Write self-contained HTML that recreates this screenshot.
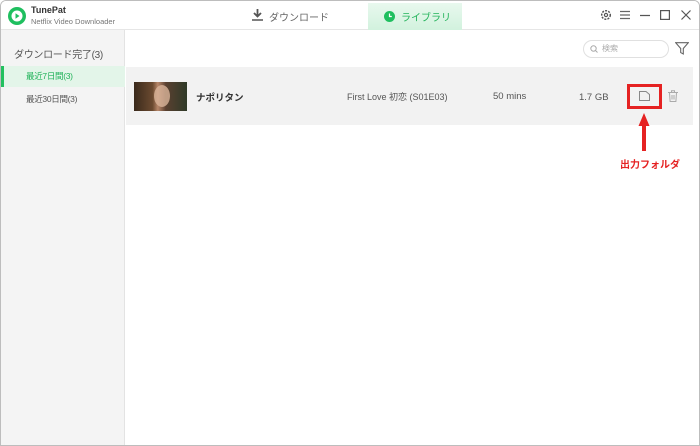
<!DOCTYPE html>
<html><head><meta charset="utf-8"><style>
*{margin:0;padding:0;box-sizing:border-box}
body{width:700px;height:446px;overflow:hidden;background:#fff;font-family:"Liberation Sans","Noto Sans CJK JP",sans-serif;position:relative}
.win{position:absolute;left:0;top:0;width:700px;height:446px;border:1px solid #bdbdbd;border-radius:6px 6px 0 0;overflow:hidden}
.top{position:absolute;left:0;top:0;width:700px;height:29px;background:#fff;border-bottom:1px solid #e6e6e6}
.side{position:absolute;left:0;top:29px;width:124px;height:417px;background:#f4f4f4;border-right:1px solid #e3e3e3}
.abs{position:absolute;white-space:nowrap}
</style></head><body><div class="win">
<div class="top">
 <svg class="abs" style="left:7px;top:6px" width="18" height="18" viewBox="0 0 18 18"><circle cx="9" cy="9" r="9" fill="#1fbf5f"/><circle cx="9" cy="9" r="5.5" fill="#fff"/><path d="M7.5 6.3 L11.5 9 L7.5 11.7Z" fill="#1fbf5f"/></svg>
 <div class="abs" style="left:30px;top:4px;font-size:9px;font-weight:bold;color:#333">TunePat</div>
 <div class="abs" style="left:30px;top:16px;font-size:7.5px;color:#777">Netflix Video Downloader</div>
 <svg class="abs" style="left:251px;top:8px" width="11" height="12" viewBox="0 0 11 12"><path d="M5.5 0v7M2 4l3.5 3.5L9 4" stroke="#555" stroke-width="1.8" fill="none"/><path d="M0 11h11" stroke="#555" stroke-width="1.6"/></svg>
 <div class="abs" style="left:268px;top:8px;font-size:10px;color:#666">ダウンロード</div>
 <div class="abs" style="left:367px;top:2px;width:94px;height:27px;background:linear-gradient(#e8f8ee,#d2f2de)"></div>
 <svg class="abs" style="left:383px;top:10px" width="11" height="11" viewBox="0 0 11 11"><circle cx="5.5" cy="5.5" r="5.5" fill="#1fbf5f"/><path d="M5.5 2.5v3h2.3" stroke="#fff" stroke-width="1.2" fill="none"/></svg>
 <div class="abs" style="left:400px;top:8px;font-size:10px;color:#22b35a">ライブラリ</div>
 <svg class="abs" style="left:599px;top:8px" width="12" height="12" viewBox="0 0 12 12"><circle cx="6" cy="6" r="4.3" fill="none" stroke="#555" stroke-width="1.5" stroke-dasharray="2 1.2"/><circle cx="6" cy="6" r="1.6" fill="none" stroke="#555" stroke-width="1.2"/></svg>
 <svg class="abs" style="left:619px;top:9px" width="10" height="10" viewBox="0 0 10 10"><path d="M0 1.5h10M0 5h10M0 8.5h10" stroke="#666" stroke-width="1.2"/></svg>
 <svg class="abs" style="left:639px;top:9px" width="10" height="10"><path d="M0 5.5h10" stroke="#555" stroke-width="1.2"/></svg>
 <svg class="abs" style="left:659px;top:9px" width="10" height="10"><rect x="0.6" y="0.6" width="8.8" height="8.8" fill="none" stroke="#555" stroke-width="1.2"/></svg>
 <svg class="abs" style="left:680px;top:9px" width="10" height="10"><path d="M0.5 0.5l9 9M9.5 0.5l-9 9" stroke="#555" stroke-width="1.2"/></svg>
</div>
<div class="side">
 <div class="abs" style="left:13px;top:16px;font-size:10px;color:#555;letter-spacing:-0.3px">ダウンロード完了(3)</div>
 <div class="abs" style="left:0;top:36px;width:124px;height:21px;background:#e3f5e9;border-left:3px solid #22c05f"></div>
 <div class="abs" style="left:25px;top:40px;font-size:8.5px;color:#22b35a;letter-spacing:-0.3px">最近7日間(3)</div>
 <div class="abs" style="left:25px;top:63px;font-size:8.5px;color:#555;letter-spacing:-0.3px">最近30日間(3)</div>
</div>
<div class="abs" style="left:582px;top:39px;width:86px;height:18px;border:1px solid #e0e0e0;border-radius:9px"></div>
<svg class="abs" style="left:589px;top:44px" width="8" height="8"><circle cx="3.5" cy="3.5" r="2.7" fill="none" stroke="#aaa" stroke-width="1"/><path d="M5.5 5.5l2 2" stroke="#aaa"/></svg>
<div class="abs" style="left:601px;top:42px;font-size:8px;color:#aaa">検索</div>
<svg class="abs" style="left:674px;top:41px" width="14" height="13" viewBox="0 0 14 13"><path d="M0.7 0.7h12.6L8.3 6.5v5.5L5.7 10.6V6.5Z" fill="none" stroke="#666" stroke-width="1.1"/></svg>
<div class="abs" style="left:125px;top:66px;width:567px;height:58px;background:#f2f2f2"></div>
<div class="abs" style="left:133px;top:81px;width:53px;height:29px;background:linear-gradient(90deg,#3a2a1c,#6b4a30 35%,#b8876a 45%,#5a4030 60%,#2f3a28)"></div>
<div class="abs" style="left:153px;top:84px;width:16px;height:22px;border-radius:50%;background:#d9b49a;opacity:.8"></div>
<div class="abs" style="left:195px;top:89px;font-size:9.5px;font-weight:bold;color:#333">ナポリタン</div>
<div class="abs" style="left:346px;top:89px;font-size:9px;color:#555">First Love 初恋 (S01E03)</div>
<div class="abs" style="left:492px;top:90px;font-size:9.5px;color:#555">50 mins</div>
<div class="abs" style="left:578px;top:91px;font-size:9.5px;color:#555">1.7 GB</div>
<div class="abs" style="left:626px;top:83px;width:35px;height:25px;border:3px solid #e52222"></div>
<svg class="abs" style="left:638px;top:90px" width="11" height="10"><path d="M0.5 0.5h6.5l3.5 3v6H0.5Z" fill="none" stroke="#888" stroke-width="1"/></svg>
<svg class="abs" style="left:667px;top:89px" width="10" height="12"><path d="M0 2.5h10M3.5 2.5V0.8h3v1.7M1.5 2.5l.6 9h5.8l.6-9M4 5v4.5M6 5v4.5" fill="none" stroke="#aaa" stroke-width="1"/></svg>
<svg class="abs" style="left:637px;top:112px" width="12" height="38"><path d="M6 0L11.5 13H8V38H4V13H0.5Z" fill="#e52222"/></svg>
<div class="abs" style="left:619px;top:155px;font-size:10px;font-weight:bold;color:#e52222">出力フォルダ</div>
</div></body></html>
